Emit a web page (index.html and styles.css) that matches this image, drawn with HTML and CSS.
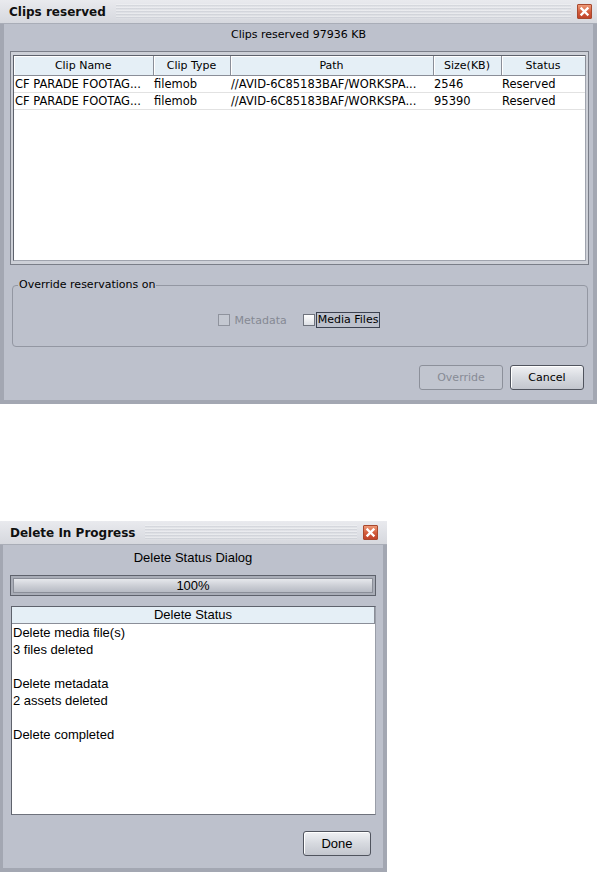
FILE: index.html
```html
<!DOCTYPE html>
<html>
<head>
<meta charset="utf-8">
<link rel="stylesheet" href="styles.css">
</head>
<body>
<div class="dlg dlg-clips">
  <div class="titlebar">
    <span class="title">Clips reserved</span>
    <span class="grip"></span>
    <span class="close"><svg width="15" height="15" viewBox="0 0 15 15"><path d="M4.5 4.5 L10.5 10.5 M10.5 4.5 L4.5 10.5" stroke="#fff" stroke-width="2.4" stroke-linecap="square"/></svg></span>
  </div>
  <div class="body">
    <div class="caption">Clips reserved 97936 KB</div>
    <div class="pane">
      <div class="pane-inner">
        <table class="grid">
          <colgroup>
            <col class="c1"><col class="c2"><col class="c3"><col class="c4"><col class="c5"><col>
          </colgroup>
          <thead>
            <tr><th>Clip Name</th><th>Clip Type</th><th>Path</th><th>Size(KB)</th><th>Status</th><th class="filler"></th></tr>
          </thead>
          <tbody>
            <tr><td>CF PARADE FOOTAG...</td><td>filemob</td><td>//AVID-6C85183BAF/WORKSPA...</td><td>2546</td><td>Reserved</td><td class="filler"></td></tr>
            <tr><td>CF PARADE FOOTAG...</td><td>filemob</td><td>//AVID-6C85183BAF/WORKSPA...</td><td>95390</td><td>Reserved</td><td class="filler"></td></tr>
          </tbody>
        </table>
      </div>
    </div>
    <fieldset class="group">
      <legend>Override reservations on</legend>
      <div class="checks">
        <span class="check disabled"><span class="box"></span><span class="lbl">Metadata</span></span>
        <span class="check"><span class="box"></span><span class="lbl focus">Media Files</span></span>
      </div>
    </fieldset>
    <div class="actions">
      <button class="btn btn-override" disabled>Override</button>
      <button class="btn btn-cancel">Cancel</button>
    </div>
  </div>
</div>

<div class="dlg dlg-delete">
  <div class="titlebar">
    <span class="title">Delete In Progress</span>
    <span class="grip"></span>
    <span class="close"><svg width="15" height="15" viewBox="0 0 15 15"><path d="M4.5 4.5 L10.5 10.5 M10.5 4.5 L4.5 10.5" stroke="#fff" stroke-width="2.4" stroke-linecap="square"/></svg></span>
  </div>
  <div class="body">
    <div class="caption">Delete Status Dialog</div>
    <div class="progress"><span>100%</span></div>
    <div class="list">
      <div class="list-head">Delete Status</div>
      <div class="list-body">
        <div class="line">Delete media file(s)</div>
        <div class="line">3 files deleted</div>
        <div class="line"></div>
        <div class="line">Delete metadata</div>
        <div class="line">2 assets deleted</div>
        <div class="line"></div>
        <div class="line">Delete completed</div>
      </div>
    </div>
    <div class="actions">
      <button class="btn btn-done">Done</button>
    </div>
  </div>
</div>
</body>
</html>
```

FILE: styles.css
```css
* { box-sizing: border-box; }

body {
  margin: 0;
  background: #ffffff;
  font-family: "DejaVu Sans", Verdana, sans-serif;
  font-size: 11px;
  color: #000;
}

.dlg {
  display: flex;
  flex-direction: column;
}

.dlg-clips { width: 597px; height: 404px; }
.dlg-delete {
  width: 387px;
  height: 351px;
  margin-top: 117px;
  font-family: "Liberation Sans", Arial, sans-serif;
  font-size: 13px;
}

/* title bar */
.titlebar {
  height: 24px;
  flex: none;
  display: flex;
  align-items: center;
  padding: 0 5px 0 9px;
  background: linear-gradient(#e9eaee, #d6d8de);
  border-bottom: 1px solid #a9adb7;
}
.title {
  font-family: "DejaVu Sans", Verdana, sans-serif;
  font-weight: bold;
  font-size: 12px;
  color: #101010;
  white-space: nowrap;
}
.dlg-delete .titlebar { padding-left: 10px; padding-right: 9px; }
.grip {
  flex: 1;
  height: 15px;
  margin: 0 6px 0 10px;
  background: repeating-linear-gradient(to bottom, #f2f3f5 0 1px, #c9ccd3 1px 2px, #dfe1e5 2px 3px);
  opacity: 0.55;
}
.close {
  width: 15px;
  height: 15px;
  flex: none;
  display: flex;
  border: 1px solid #a8482e;
  border-radius: 1px;
  background: linear-gradient(#ee9a78, #d25a3a 55%, #c0432a);
}
.close svg { display: block; margin: -1px; }

/* body */
.body {
  flex: 1;
  display: flex;
  flex-direction: column;
  background: #bdc1cc;
  border: 4px solid #a3a7b2;
  border-top: 0;
}
.caption {
  text-align: center;
  line-height: 14px;
  margin-top: 4px;
}

/* table pane */
.pane {
  margin: 9px 4px 0 6px;
  height: 214px;
  border: 1px solid #7a7e88;
  padding: 3px 2px;
  background: #cdd0d7;
}
.pane-inner {
  height: 100%;
  background: #fff;
  border: 1px solid #5e626c;
  border-right-color: #a0a4ae;
  border-bottom-color: #a0a4ae;
}
.grid {
  border-collapse: collapse;
  table-layout: fixed;
  width: 100%;
}
.grid .c1 { width: 139px; }
.grid .c2 { width: 77px; }
.grid .c3 { width: 203px; }
.grid .c4 { width: 68px; }
.grid .c5 { width: 84px; }
.grid th {
  height: 19px;
  font-weight: normal;
  text-align: center;
  background: #e5eff6;
  border-right: 1px solid #8a8e98;
  border-bottom: 1px solid #8a8e98;
  box-shadow: inset 1px 1px 0 #ffffff;
  padding: 0;
  white-space: nowrap;
}
.grid th.filler { border-right: 0; }
.grid td {
  height: 17px;
  padding: 0 0 0 1px;
  font-size: 11.5px;
  white-space: nowrap;
  overflow: hidden;
  border-bottom: 1px solid #e2e2e2;
}
.grid td.filler { border-bottom: 0; }

/* group box */
.group {
  margin: 13px 5px 0 8px;
  border: 1px solid #9397a2;
  border-radius: 4px;
  padding: 20px 0 18px;
  min-width: 0;
}
.group legend {
  line-height: 14px;
  padding: 0 1px;
  margin-left: 5px;
}
.checks {
  display: flex;
  justify-content: center;
  align-items: center;
  gap: 16px;
  height: 16px;
  padding-right: 2px;
}
.check {
  display: flex;
  align-items: center;
  gap: 4px;
}
.box {
  width: 12px;
  height: 12px;
  border: 1px solid #6f737d;
  background: linear-gradient(#ffffff, #dde0e5);
}
.check.disabled .box {
  border-color: #8f939d;
  background: #c4c8d1;
}
.check.disabled .lbl { color: #858993; margin-left: 1px; }
.lbl.focus {
  border: 1px solid #3c4250;
  padding: 0 1px;
  line-height: 14px;
  margin-left: -3px;
}

/* buttons */
.actions {
  display: flex;
  justify-content: flex-end;
  gap: 7px;
  margin-top: 18px;
  padding: 0 9px 10px 0;
}
.btn {
  height: 25px;
  font: inherit;
  color: #000;
  border: 1px solid #50545e;
  border-radius: 3px;
  background: linear-gradient(#f0f1f4, #d6d9df 50%, #c3c6ce);
  box-shadow: inset 1px 1px 0 #ffffff;
  padding: 0;
}
.btn-override {
  width: 84px;
  color: #878b95;
  border-color: #8c909a;
  background: #c1c5cf;
  box-shadow: none;
}
.btn-cancel { width: 74px; }

/* delete dialog */
.dlg-delete .body { border-width: 0 4px 4px 3px; }
.dlg-delete .caption { margin-top: 6px; }
.progress {
  margin: 10px 7px 0 7px;
  height: 21px;
  border: 1px solid #5e626c;
  padding: 2px;
  background: #a9adb7;
}
.progress span {
  display: flex;
  height: 100%;
  align-items: center;
  justify-content: center;
  background: linear-gradient(#e6e8ec, #c8cbd2 60%, #b7bbc4);
  border: 1px solid #8a8e98;
  line-height: 13px;
}
.list {
  margin: 10px 7px 0 8px;
  height: 209px;
  background: #fff;
  border: 1px solid #5e626c;
  border-right-color: #9a9ea8;
  border-bottom-color: #6e727c;
}
.list-head {
  height: 17px;
  text-align: center;
  line-height: 16px;
  background: #e5eff6;
  border-bottom: 1px solid #8a8e98;
  border-right: 1px solid #8a8e98;
}
.list-body { padding: 0 0 0 1px; }
.line { height: 17px; line-height: 17px; white-space: nowrap; }
.dlg-delete .actions { margin-top: 16px; padding: 0 12px 12px 0; }
.btn-done { width: 68px; }
```
